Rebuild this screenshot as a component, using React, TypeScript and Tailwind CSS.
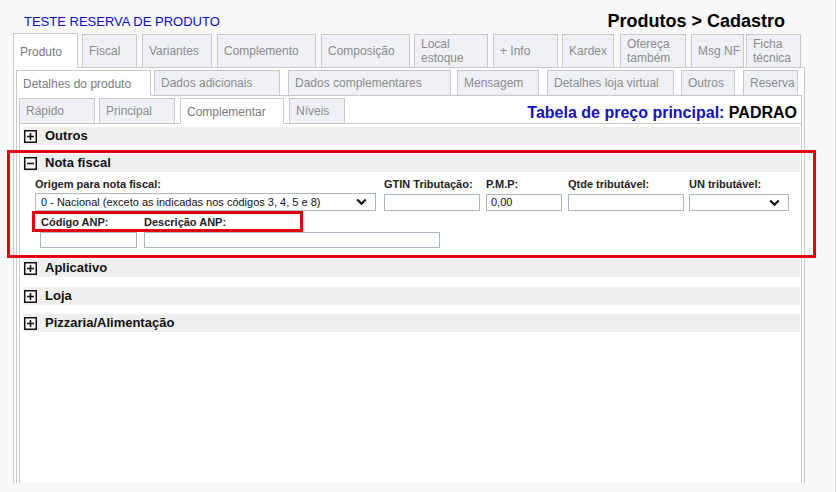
import React from "react";

type Tab = { label: React.ReactNode; cls: string; active?: boolean };

const row1: Tab[] = [
  { label: "Produto", cls: "w-[65px]", active: true },
  { label: "Fiscal", cls: "w-[55px] ml-[4px]" },
  { label: "Variantes", cls: "w-[70px] ml-[5px]" },
  { label: "Complemento", cls: "w-[99px] ml-[5px]" },
  { label: "Composição", cls: "w-[89px] ml-[5px]" },
  { label: <>Local<br />estoque</>, cls: "w-[74px] ml-[4px]" },
  { label: "+ Info", cls: "w-[65px] ml-[5px]" },
  { label: "Kardex", cls: "w-[52px] ml-[4px]" },
  { label: <>Ofereça<br />também</>, cls: "w-[66px] ml-[6px]" },
  { label: "Msg NF", cls: "w-[53px] ml-[5px]" },
  { label: <>Ficha<br />técnica</>, cls: "w-[55px] ml-[2px]" },
];

const row2: Tab[] = [
  { label: "Detalhes do produto", cls: "w-[135px]", active: true },
  { label: "Dados adicionais", cls: "w-[126px] ml-[3px]" },
  { label: "Dados complementares", cls: "w-[163px] ml-[8px]" },
  { label: "Mensagem", cls: "w-[82px] ml-[6px]" },
  { label: "Detalhes loja virtual", cls: "w-[127px] ml-[8px]" },
  { label: "Outros", cls: "w-[54px] ml-[7px]" },
  { label: "Reserva", cls: "w-[55px] ml-[8px]" },
];

const row3: Tab[] = [
  { label: "Rápido", cls: "w-[76px]" },
  { label: "Principal", cls: "w-[76px] ml-[4px]" },
  { label: "Complementar", cls: "w-[104px] ml-[5px]", active: true },
  { label: "Níveis", cls: "w-[56px] ml-[5px]" },
];

function TabItem({ t, h, hActive, activePad }: { t: Tab; h: string; hActive: string; activePad: string }) {
  if (t.active) {
    return (
      <div
        className={`${t.cls} ${hActive} ${activePad} shrink-0 bg-white border border-[#c8c8c8] border-b-white pl-[6px] flex items-center text-[12px] leading-[14px] text-[#7a7a7a] whitespace-nowrap overflow-hidden`}
      >
        <span>{t.label}</span>
      </div>
    );
  }
  return (
    <div
      className={`${t.cls} ${h} shrink-0 bg-[#eef0f5] border border-[#c8c8c8] pl-[6px] flex items-center text-[12px] leading-[14px] text-[#8c8c8c] whitespace-nowrap overflow-hidden`}
    >
      <span>{t.label}</span>
    </div>
  );
}

function BoxIcon({ plus }: { plus: boolean }) {
  return (
    <svg width="13" height="13" viewBox="0 0 13 13" className="shrink-0">
      <rect x="0.75" y="0.75" width="11.5" height="11.5" fill="white" stroke="#111" strokeWidth="1.5" />
      <line x1="3" y1="6.5" x2="10" y2="6.5" stroke="#111" strokeWidth="1.6" />
      {plus && <line x1="6.5" y1="3" x2="6.5" y2="10" stroke="#111" strokeWidth="1.6" />}
    </svg>
  );
}

function Section({ title, plus = true, cls = "" }: { title: string; plus?: boolean; cls?: string }) {
  return (
    <div className={`h-[18px] bg-[#efefef] ml-[3px] mr-[1px] flex items-center pl-[1px] ${cls}`}>
      <BoxIcon plus={plus} />
      <span className="ml-[8px] text-[13px] font-bold text-[#111] leading-[16px]">{title}</span>
    </div>
  );
}

function Chevron() {
  return (
    <svg width="11" height="8" viewBox="0 0 11 8">
      <polyline points="1.2,1.5 5.5,5.8 9.8,1.5" fill="none" stroke="#111" strokeWidth="2.2" />
    </svg>
  );
}

const label = "text-[11px] font-bold leading-[13px] text-[#222] whitespace-nowrap";
const input = "h-[17px] mt-[3px] border border-[#abb6c3] bg-white";

export default function App() {
  return (
    <div className="w-[837px] h-[492px] bg-[#f8f8f8] relative overflow-hidden font-['Liberation_Sans',Arial,sans-serif]">
      {/* header */}
      <div className="h-[33px] flex justify-between">
        <div className="pt-[14px] pl-[24px] text-[13px] leading-[15px] text-[#0c0cc8]">TESTE RESERVA DE PRODUTO</div>
        <div className="pt-[11px] mr-[52px] text-[18px] leading-[21px] font-bold text-black">Produtos &gt; Cadastro</div>
      </div>

      {/* tab row 1 */}
      <div className="flex items-end ml-[13px] h-[35px] relative z-10 -mb-px">
        {row1.map((t, i) => (
          <TabItem key={i} t={t} h="h-[34px]" hActive="h-[35px]" activePad="pt-[3px]" />
        ))}
      </div>

      {/* panel 1 */}
      <div className="ml-[13px] w-[792px] h-[416px] border border-b-0 border-[#c8c8c8] bg-white pt-[2px] px-[2px] flex flex-col">
        <div className="flex items-end h-[26px] relative z-10 -mb-px">
          {row2.map((t, i) => (
            <TabItem key={i} t={t} h="h-[26px]" hActive="h-[26px]" activePad="pt-[2px]" />
          ))}
        </div>

        {/* panel 2 */}
        <div className="flex-1 border border-b-0 border-[#c8c8c8] pl-[2px] pt-[2px] flex flex-col">
          <div className="flex items-end h-[26px] relative z-10 -mb-px">
            {row3.map((t, i) => (
              <TabItem key={i} t={t} h="h-[26px]" hActive="h-[26px]" activePad="pt-[2px]" />
            ))}
            <div className="ml-auto mr-[4px] self-center pt-[4px] text-[16px] leading-[18px] font-bold whitespace-nowrap">
              <span className="text-[#1212b4]">Tabela de preço principal:</span>
              <span className="text-black"> PADRAO</span>
            </div>
          </div>

          {/* panel 3 */}
          <div className="flex-1 border-l border-t border-[#c8c8c8] bg-white pt-[3px]">
            <Section title="Outros" />
            <Section title="Nota fiscal" plus={false} cls="mt-[9px]" />

            <div className="pl-[15px]">
              <div className="flex mt-[6px]">
                <div className="flex flex-col w-[341px]">
                  <span className={label}>Origem para nota fiscal:</span>
                  <div className="h-[18px] mt-[2px] border border-[#abb6c3] bg-white flex items-center pl-[5px] pr-[8px]">
                    <span className="text-[11px] leading-[13px] text-[#111] whitespace-nowrap">
                      0 - Nacional (exceto as indicadas nos códigos 3, 4, 5 e 8)
                    </span>
                    <span className="ml-auto flex"><Chevron /></span>
                  </div>
                </div>
                <div className="flex flex-col w-[96px] ml-[8px]">
                  <span className={label}>GTIN Tributação:</span>
                  <div className={input} />
                </div>
                <div className="flex flex-col w-[76px] ml-[6px]">
                  <span className={label}>P.M.P:</span>
                  <div className={`${input} flex items-center pl-[4px]`}>
                    <span className="text-[11px] leading-[13px] text-[#111]">0,00</span>
                  </div>
                </div>
                <div className="flex flex-col w-[116px] ml-[6px]">
                  <span className={label}>Qtde tributável:</span>
                  <div className={input} />
                </div>
                <div className="flex flex-col w-[100px] ml-[5px]">
                  <span className={label}>UN tributável:</span>
                  <div className={`${input} flex items-center justify-end pr-[8px]`}>
                    <Chevron />
                  </div>
                </div>
              </div>

              <div className="flex mt-[5px]">
                <div className="flex flex-col w-[97px] ml-[5px]">
                  <span className={`${label} pl-[1px]`}>Código ANP:</span>
                  <div className="h-[16px] mt-[3px] border border-[#abb6c3] bg-white" />
                </div>
                <div className="flex flex-col w-[296px] ml-[7px]">
                  <span className={label}>Descrição ANP:</span>
                  <div className="h-[16px] mt-[3px] border border-[#abb6c3] bg-white" />
                </div>
              </div>
            </div>

            <Section title="Aplicativo" cls="mt-[11px]" />
            <Section title="Loja" cls="mt-[10px]" />
            <Section title="Pizzaria/Alimentação" cls="mt-[9px]" />
          </div>
        </div>
      </div>

      {/* annotation boxes */}
      <div className="absolute left-[7px] top-[150px] w-[809px] h-[108px] border-[3px] border-[#e0000f] pointer-events-none" />
      <div className="absolute left-[32px] top-[211px] w-[271px] h-[21px] border-[3px] border-[#e0000f] pointer-events-none" />

      {/* scrollbar edge */}
      <div className="absolute left-[835px] top-0 w-[1px] h-full bg-[#e2e2e2]" />
      <div className="absolute left-[836px] top-0 w-[1px] h-full bg-white" />
    </div>
  );
}
